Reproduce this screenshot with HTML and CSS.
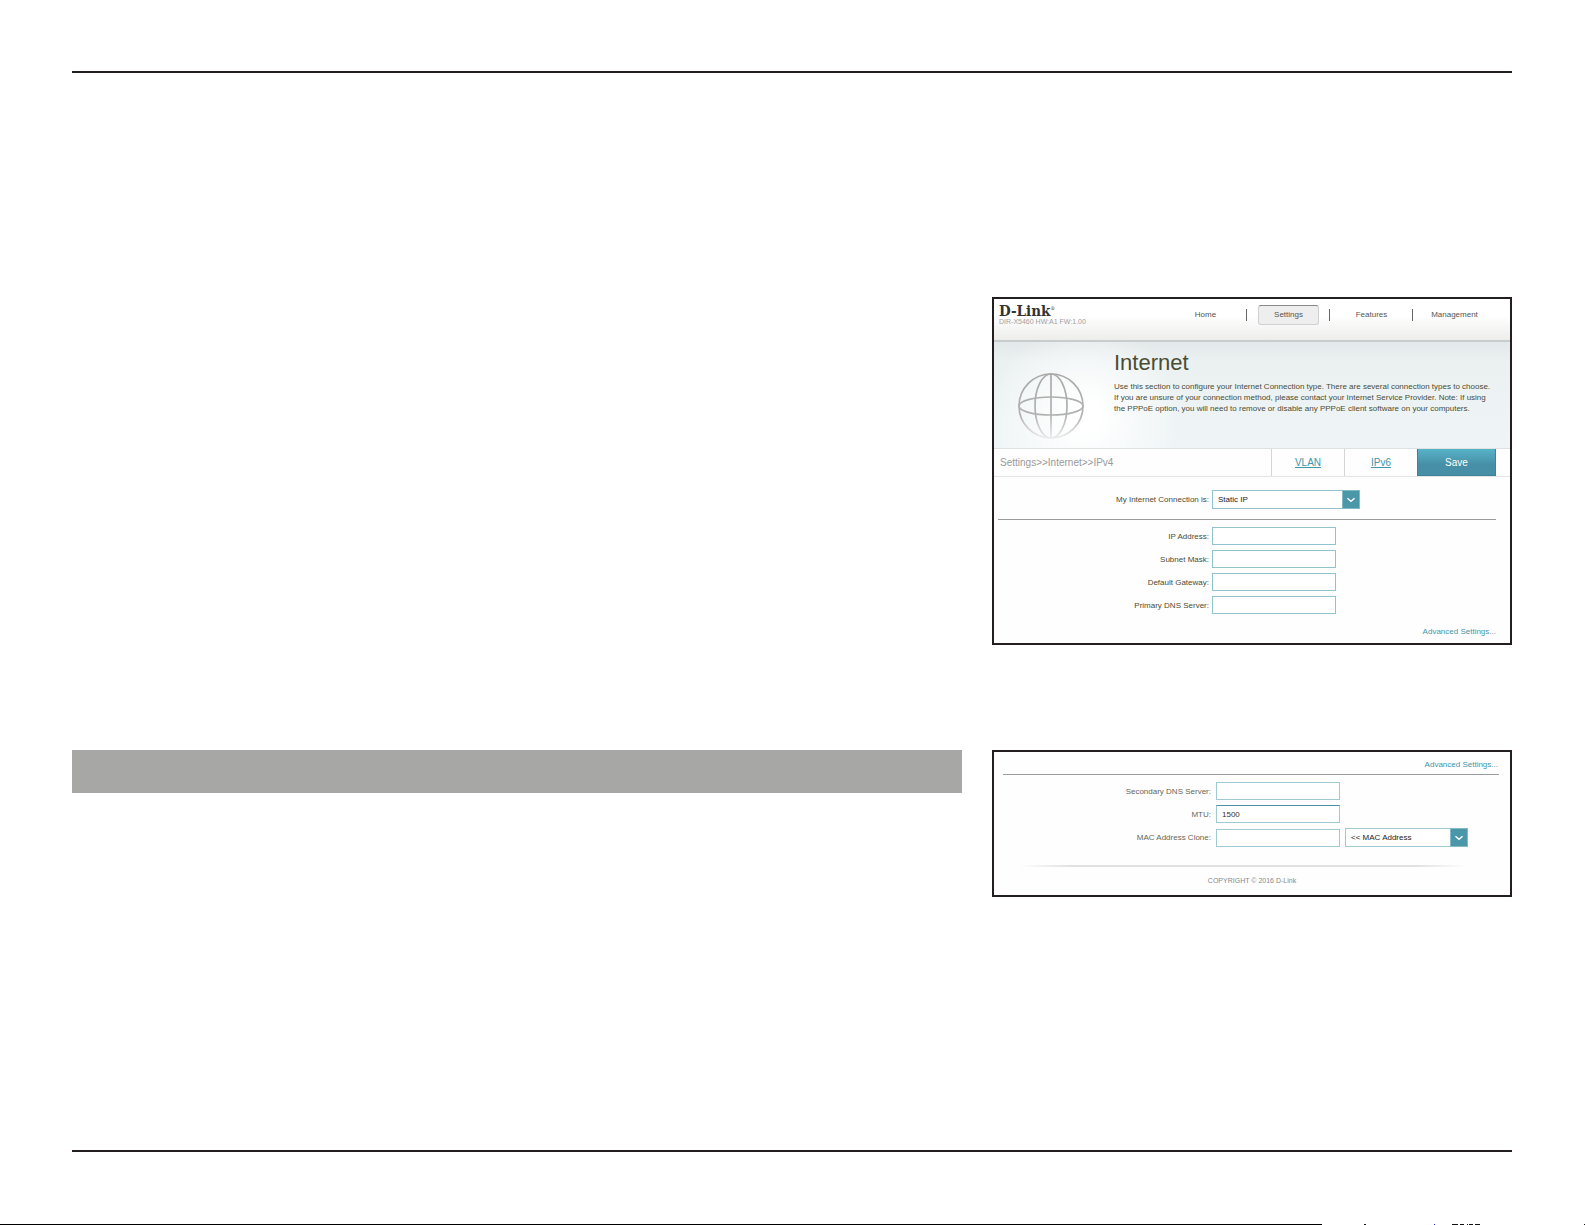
FILE: index.html
```html
<!DOCTYPE html>
<html lang="en">
<head>
<meta charset="utf-8">
<meta name="viewport" content="width=device-width, initial-scale=1">
<title>D-Link - Internet</title>
<link rel="stylesheet" href="styles.css">
</head>
<body>
<div class="page">
  <main class="sheet">
    <section class="panel" aria-label="IPv4 settings">
      <header class="topbar">
        <div class="brand">
          <div class="logo">D-Link<sup class="mark">®</sup></div>
          <div class="version">DIR-X5460 HW:A1 FW:1.00</div>
        </div>
        <nav class="nav">
          <a class="nav-item" href="#home"><span class="nav-label">Home</span></a>
          <a class="nav-item" href="#settings"><span class="nav-label active">Settings</span></a>
          <a class="nav-item" href="#features"><span class="nav-label">Features</span></a>
          <a class="nav-item" href="#management"><span class="nav-label">Management</span></a>
        </nav>
      </header>
      <div class="hero">
        <svg class="globe" viewBox="0 0 66 66" aria-hidden="true">
          <defs>
            <linearGradient id="fade" gradientUnits="userSpaceOnUse" x1="0" y1="0" x2="0" y2="66">
              <stop offset="0" stop-color="#a9a9a9"/>
              <stop offset="0.65" stop-color="#b2b2b2"/>
              <stop offset="1" stop-color="#eeeeee"/>
            </linearGradient>
          </defs>
          <g fill="none" stroke="url(#fade)" stroke-width="1.7">
            <circle cx="33" cy="33" r="32"/>
            <ellipse cx="33" cy="33" rx="16" ry="32"/>
            <ellipse cx="33" cy="33" rx="32" ry="9"/>
            <path d="M33 1L33.01 65"/>
          </g>
        </svg>
        <div class="intro">
          <h1 class="title">Internet</h1>
          <p class="desc">Use this section to configure your Internet Connection type. There are several connection types to choose.<br>If you are unsure of your connection method, please contact your Internet Service Provider. Note: If using<br>the PPPoE option, you will need to remove or disable any PPPoE client software on your computers.</p>
        </div>
      </div>
      <div class="toolbar">
        <div class="crumbs">Settings&gt;&gt;Internet&gt;&gt;IPv4</div>
        <a class="tab" href="#vlan">VLAN</a>
        <a class="tab" href="#ipv6">IPv6</a>
        <button class="save" type="button">Save</button>
      </div>
      <div class="row first">
        <label class="label" for="conn">My Internet Connection is:</label>
        <span class="picker wide">
          <select id="conn" class="field"><option>Static IP</option></select>
          <svg class="arrow" viewBox="0 0 18 19" aria-hidden="true"><path d="M5 8L9 11.500L13 8" fill="none" stroke="#fff" stroke-width="1.500"/></svg>
        </span>
      </div>
      <hr class="divider">
      <div class="fields">
        <div class="row"><label class="label" for="ip">IP Address:</label><input id="ip" class="field" type="text"></div>
        <div class="row"><label class="label" for="mask">Subnet Mask:</label><input id="mask" class="field" type="text"></div>
        <div class="row"><label class="label" for="gw">Default Gateway:</label><input id="gw" class="field" type="text"></div>
        <div class="row"><label class="label" for="dns1">Primary DNS Server:</label><input id="dns1" class="field" type="text"></div>
      </div>
      <div class="more"><a class="advanced" href="#advanced">Advanced Settings...</a></div>
    </section>

    <div class="heading-bar"></div>

    <section class="panel advanced-panel" aria-label="Advanced settings">
      <div class="more"><a class="advanced" href="#advanced">Advanced Settings...</a></div>
      <hr class="divider">
      <div class="fields">
        <div class="row"><label class="label" for="dns2">Secondary DNS Server:</label><input id="dns2" class="field" type="text"></div>
        <div class="row"><label class="label" for="mtu">MTU:</label><input id="mtu" class="field focus" type="text" value="1500"></div>
        <div class="row">
          <label class="label" for="mac">MAC Address Clone:</label><input id="mac" class="field" type="text">
          <span class="picker">
            <select class="field" aria-label="MAC address source"><option>&lt;&lt; MAC Address</option></select>
            <svg class="arrow" viewBox="0 0 18 19" aria-hidden="true"><path d="M5 8L9 11.500L13 8" fill="none" stroke="#fff" stroke-width="1.500"/></svg>
          </span>
        </div>
      </div>
      <div class="shade"></div>
      <div class="copyright">COPYRIGHT © 2016 D-Link</div>
    </section>
  </main>
  <div class="foot"></div>
  <div class="edge">
    <div class="edge-line"></div>
    <svg class="specks" viewBox="0 0 263 1" aria-hidden="true">
      <path d="M42 0h2v1h-2zM130 0h3v1h-3zM133 0h3v1h-3zM138 0h4v1h-4zM145 0h1v1h-1zM147 0h4v1h-4zM153 0h5v1h-5zM262 0h1v1h-1z" fill="#111"/>
      <path d="M112 0h1v1h-1z" fill="#22c"/>
    </svg>
  </div>
</div>
</body>
</html>
```
FILE: styles.css
```css
* { box-sizing: border-box; }

body {
  margin: 0;
  background: #fff;
  color: #4b4c33;
  font-family: "Liberation Sans", Arial, sans-serif;
  font-size: 8px;
  line-height: 11px;
}

a { color: inherit; text-decoration: none; }

.page {
  display: flex;
  flex-direction: column;
  min-height: 100vh;
  padding-top: 71px;
}

.sheet {
  display: grid;
  grid-template-columns: 1fr 520px;
  gap: 105px 30px;
  align-items: start;
  margin: 0 73px 0 72px;
  padding-top: 224px;
  border-top: 2px solid #231f20;
}

.panel {
  grid-column: 2;
  border: 2px solid #231f20;
  background: #fefefe;
}

.heading-bar { height: 43px; background: #a7a7a6; }

/* Header */
.topbar {
  display: flex;
  justify-content: space-between;
  height: 43px;
  padding: 5px 14px 0 5px;
  background: linear-gradient(#fff 40%, #ededec);
  border-bottom: 2px solid #c9cccc;
}

.logo {
  color: #333;
  font: bold 15px/14px "DejaVu Serif Condensed", "DejaVu Serif", serif;
}

.mark {
  font-size: 5px;
  font-weight: 400;
  line-height: 5px;
  vertical-align: 6px;
}

.version { color: #a0a0a0; font-size: 7px; line-height: 8px; }

.nav {
  display: grid;
  grid-template-columns: repeat(4, 83px);
  align-items: start;
  color: #555;
}

.nav-item {
  display: flex;
  justify-content: center;
  align-items: center;
  height: 22px;
  background: linear-gradient(#666, #666) right 5px / 1px 12px no-repeat;
}

.nav-item:last-child { background: none; }

.nav-label { width: 61px; text-align: center; line-height: 18px; }

.nav-label.active {
  background: #eee;
  border: 1px solid #d0d0d0;
  border-top-color: #888;
  border-radius: 3px;
}

/* Banner */
.hero {
  display: flex;
  align-items: flex-start;
  gap: 30px;
  height: 107px;
  padding: 8px 14px 0 24px;
  background:
    radial-gradient(circle at 90px 75px, #fff 15px, rgba(255, 255, 255, 0) 95px),
    linear-gradient(#e3e8ea, #ebf1f1 20px, #eff5f7);
  border-bottom: 1px solid #dde1e1;
}

.globe { flex: none; width: 66px; height: 66px; margin-top: 23px; }

.title { margin: 0; font-size: 22px; font-weight: 400; line-height: 26px; }

.desc { margin: 5px 0 0; white-space: nowrap; }

/* Breadcrumb and tabs */
.toolbar {
  display: flex;
  height: 28px;
  padding: 0 14px 0 6px;
  border-bottom: 1px solid #e4e4e4;
  font-size: 10px;
  line-height: 27px;
}

.crumbs { flex: 1; color: #999; }

.tab {
  width: 73px;
  border-left: 1px solid #d5d5d5;
  color: #4296aa;
  text-align: center;
  text-decoration: underline;
}

.save {
  width: 79px;
  padding: 0;
  border: 1px solid #3c8599;
  border-top: 0;
  background: linear-gradient(#58b3c9, #468fa6 60%);
  color: #fff;
  font: inherit;
}

/* Forms */
.row {
  display: grid;
  grid-template-columns: 215px 124px 124px;
  column-gap: 3px;
  align-items: center;
}

.row.first { margin: 13px 0 10px; }

.label { text-align: right; }

.field {
  width: 100%;
  height: 18px;
  padding: 0 5px;
  border: 1px solid #91c3cf;
  border-radius: 0;
  outline: 0;
  background: #fff;
  color: #333;
  font: inherit;
  appearance: none;
}

.picker { position: relative; display: block; height: 19px; }
.picker.wide { width: 148px; }
.picker .field { display: block; height: 19px; color: #222; }

.arrow {
  position: absolute;
  top: 0;
  right: 0;
  width: 18px;
  height: 19px;
  background: #4b97aa;
  border: 1px solid #82b9c7;
  pointer-events: none;
}

.divider { height: 1px; margin: 0 14px 0 4px; border: 0; background: #9b9b9b; }

.fields { display: grid; gap: 5px; padding-top: 7px; }

.more { padding: 12px 14px 6px; color: #4296aa; text-align: right; }

.advanced-panel .more { padding: 7px 12px 4px; }
.advanced-panel .divider { margin: 0 11px 0 9px; }
.advanced-panel .row { grid-template-columns: 217px 124px 123px; column-gap: 5px; }
.advanced-panel .label { color: #66665a; }
.advanced-panel .field { border-color: #a0c9d4; }
.advanced-panel .field.focus { border-top-color: #4b91a5; }

.shade {
  height: 2px;
  margin: 18px 42px 8px 24px;
  background: linear-gradient(90deg, #fff, #e0e0e0 12%, #e0e0e0 88%, #fff);
}

.copyright {
  padding-bottom: 9px;
  color: #888;
  font-size: 7px;
  line-height: 11px;
  text-align: center;
}

/* Page foot */
.foot {
  height: 74px;
  margin: auto 73px 0 72px;
  border-top: 2px solid #231f20;
}

.edge { display: flex; height: 1px; }
.edge-line { flex: 1; background: #000; }
.specks { flex: none; width: 263px; height: 1px; }
```
